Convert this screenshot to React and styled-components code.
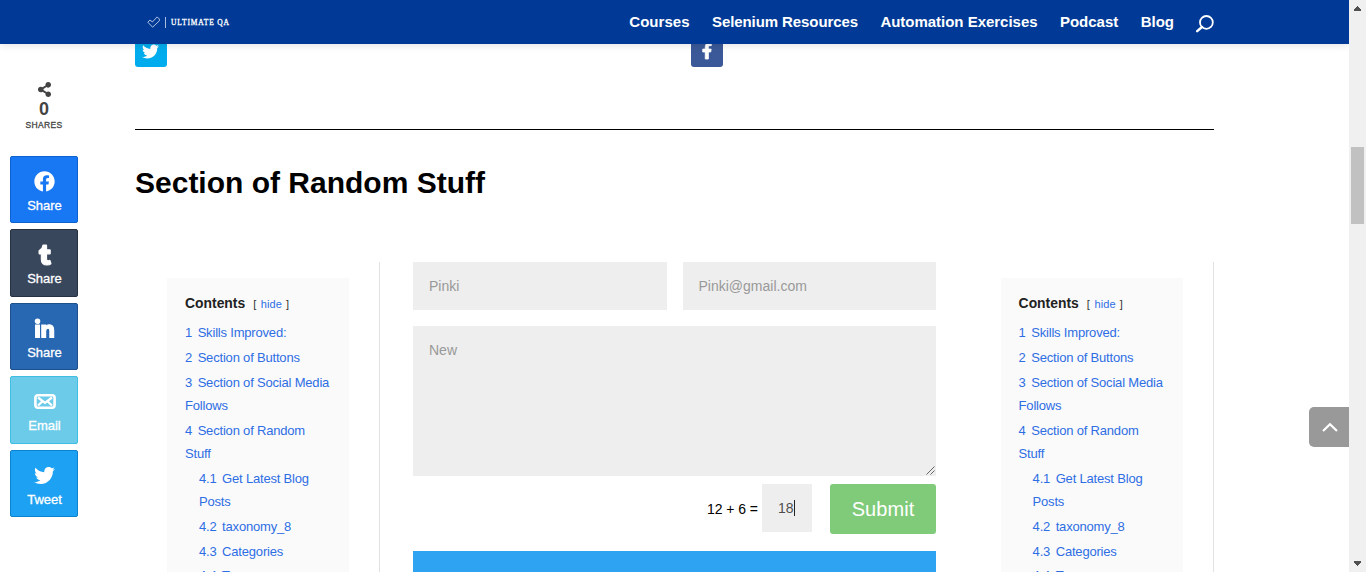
import React from 'react';
import styled, { createGlobalStyle } from 'styled-components';
import { FaTwitter, FaFacebookF, FaFacebook, FaTumblr, FaLinkedinIn, FaShareAlt } from 'react-icons/fa';

const GlobalStyle = createGlobalStyle`
  * { box-sizing: border-box; }
  body { margin: 0; background: #fff; overflow: hidden; font-family: "Liberation Sans", Arial, sans-serif; color: #000; }
  a { color: inherit; text-decoration: none; }
`;

const Window = styled.div`
  display: flex;
  width: 1366px;
  height: 572px;
  overflow: hidden;
  position: relative;
`;

const Page = styled.div`
  width: 1349px;
  height: 572px;
  overflow: hidden;
`;

const Header = styled.header`
  position: relative;
  z-index: 5;
  height: 44px;
  padding: 0 135px 0 147px;
  background: #003a96;
  box-shadow: 0 1px 8px rgba(0, 0, 0, 0.12);
  display: flex;
  align-items: center;
  justify-content: space-between;
`;

const Logo = styled.a`
  display: flex;
  align-items: center;
  color: #fff;
`;

const LogoText = styled.span`
  margin-left: 5px;
  padding-left: 5px;
  border-left: 1px solid #a9bcdd;
  font: 7.5px/11px "Liberation Serif", serif;
  -webkit-text-stroke: 0.3px #fff;
  letter-spacing: 0.85px;
  white-space: nowrap;
`;

const Nav = styled.nav`
  display: flex;
  align-items: center;
  height: 44px;
  gap: 22.4px;
`;

const NavLink = styled.a`
  color: #fff;
  font-size: 15px;
  font-weight: bold;
  line-height: 18px;
  letter-spacing: ${(p) => p.$track || 0}px;
  white-space: nowrap;
`;

const SearchButton = styled.a`
  display: flex;
  margin: 3px 0 0 -0.4px;
`;

const Body = styled.main`
  display: flex;
  align-items: flex-start;
`;

const ShareRail = styled.aside`
  width: 135px;
  flex: none;
  padding: 38px 0 0 10px;
`;

const ShareTotal = styled.div`
  width: 68px;
  height: 73.75px;
  display: flex;
  flex-direction: column;
  align-items: center;
  color: #444;
`;

const ShareCount = styled.strong`
  font-size: 18px;
  line-height: 18px;
  margin-top: 3px;
`;

const ShareLabel = styled.span`
  font-size: 8.5px;
  line-height: 12px;
  letter-spacing: 0.3px;
  margin-top: 1px;
  -webkit-text-stroke: 0.3px #444;
`;

const ShareList = styled.div`
  display: flex;
  flex-direction: column;
  gap: 6px;
`;

const ShareButton = styled.a`
  width: 68px;
  height: 67.5px;
  padding: 14px 0 0 1px;
  border: 1px solid ${(p) => p.$edge};
  border-radius: 2px;
  background: ${(p) => p.$fill};
  color: #fff;
  display: flex;
  flex-direction: column;
  align-items: center;
  font-size: 13px;
  line-height: 16px;
  -webkit-text-stroke: 0.3px #fff;
`;

const ShareIcon = styled.span`
  height: 21px;
  margin-bottom: 6px;
  padding-top: ${(p) => p.$drop || 0}px;
  display: flex;
  align-items: center;
  svg.heavy { stroke: #fff; stroke-width: 28px; overflow: visible; }
`;

const Content = styled.div`
  width: 1079px;
  flex: none;
  margin-top: -9px;
`;

const FollowRow = styled.div`
  display: grid;
  grid-template-columns: 556px 1fr;
`;

const FollowIcon = styled.a`
  width: 32px;
  height: 32px;
  padding-right: 1px;
  border-radius: 3px;
  background: ${(p) => p.$fill};
  color: #fff;
  display: flex;
  align-items: center;
  justify-content: center;
  svg.heavy { stroke: #fff; stroke-width: 26px; overflow: visible; }
`;

const Divider = styled.hr`
  margin: 62px 0 0;
  border: 0;
  height: 1px;
  background: #000;
`;

const Title = styled.h1`
  margin: 35px 0 0;
  font-size: 30px;
  line-height: 36px;
`;

const Columns = styled.div`
  display: flex;
  margin-top: 61px;
`;

const SideColumn = styled.section`
  width: 245px;
  flex: none;
  height: 310px;
  padding: 16px 30px 0 32px;
  border-right: 1px solid #e2e2e2;
`;

const TocBox = styled.div`
  height: 340px;
  padding: 14px 17px 0 ${(p) => p.$pad}px;
  background: #fafafa;
  color: #2e6ee4;
  font-size: 13px;
  line-height: 23px;
  letter-spacing: -0.19px;
`;

const TocHead = styled.div`
  display: flex;
  align-items: baseline;
  height: 23px;
  margin-bottom: 6px;
  color: #333;
  letter-spacing: 0;
`;

const TocTitle = styled.b`
  font-size: 13.9px;
  color: #222;
`;

const TocToggle = styled.span`
  margin-left: 8px;
  font-size: 11px;
  white-space: pre;
  a { color: #2e6ee4; margin: 0 1px 0 1.5px; letter-spacing: 0.1px; }
`;

const TocItem = styled.div`
  margin: 0 0 2px ${(p) => (p.$sub ? 14 : 0)}px;
  &:last-child { margin-top: -3px; padding-top: 2px; }
`;

const TocNumber = styled.span`
  margin-right: 5.6px;
`;

const FormColumn = styled.section`
  width: 523px;
  margin: 0 33px;
  flex: none;
`;

const FieldRow = styled.div`
  display: flex;
  gap: 16px;
  margin-bottom: 16px;
`;

const Field = styled.div`
  flex: 1;
  height: 48px;
  padding: 0 16px;
  background: #eee;
  color: #999;
  font-size: 14px;
  line-height: 48px;
`;

const MessageField = styled.div`
  height: 150px;
  padding: 16px;
  background: #eee;
  color: #999;
  font-size: 14px;
  line-height: 17px;
  display: flex;
  justify-content: space-between;
`;

const ResizeGrip = styled.svg`
  align-self: flex-end;
  margin: 0 -15px -15px 0;
`;

const SubmitRow = styled.div`
  display: flex;
  justify-content: flex-end;
  align-items: flex-start;
  margin-top: 8px;
  height: 67px;
`;

const Question = styled.span`
  margin-right: 4px;
  font-size: 14px;
  line-height: 50px;
  letter-spacing: -0.05px;
`;

const Answer = styled.div`
  width: 50px;
  height: 48px;
  margin-right: 18px;
  padding-left: 16px;
  background: #eee;
  color: #4e4e4e;
  font-size: 14px;
  display: flex;
  align-items: center;
`;

const Caret = styled.i`
  width: 1px;
  height: 16px;
  background: #222;
`;

const Submit = styled.button`
  width: 106px;
  height: 50px;
  border: 0;
  border-radius: 3px;
  padding: 0;
  background: #7fcb7a;
  color: #fff;
  font: 20px/50px "Liberation Sans", Arial, sans-serif;
  letter-spacing: 0.05px;
`;

const BlueBanner = styled.div`
  height: 60px;
  background: #2ea3f2;
`;

const BackToTop = styled.a`
  position: absolute;
  left: 1309px;
  top: 407px;
  width: 40px;
  height: 40px;
  padding-left: 2px;
  border-radius: 5px 0 0 5px;
  background: #999;
  display: flex;
  align-items: center;
  justify-content: center;
`;

const Scrollbar = styled.div`
  width: 17px;
  height: 572px;
  padding: 6px 2px 6px;
  background: #f0f0f0;
  display: flex;
  flex-direction: column;
  align-items: center;
`;

const Thumb = styled.div`
  width: 13px;
  height: 77px;
  margin: 136px 0 auto;
  background: #c1c1c1;
`;

const Arrow = ({ down }) => (
  <svg width="7" height="5" viewBox="0 0 7 5" shapeRendering="crispEdges">
    <path d={down ? 'M0 0.4H7V1.4L3.5 4.9L0 1.4Z' : 'M0 4.6H7V3.6L3.5 0.1L0 3.6Z'} fill="#505050" />
  </svg>
);

const EmailIcon = () => (
  <svg width="22" height="15" viewBox="0 0 22 15" fill="none" stroke="#fff">
    <rect x="1.4" y="1.3" width="19.2" height="12.4" rx="2.4" strokeWidth="2.6" />
    <path d="M4 3.5L11 8.8L18 3.5M4 11.5L8.3 7.5M18 11.5L13.7 7.5" strokeWidth="2.3" />
  </svg>
);

const shares = [
  { label: 'Share', icon: <FaFacebook size={21} />, fill: '#1877f2', edge: '#0d62d0' },
  { label: 'Share', icon: <FaTumblr size={20} className="heavy" />, fill: '#39475d', edge: '#263142' },
  { label: 'Share', icon: <FaLinkedinIn size={21} className="heavy" />, fill: '#2867b2', edge: '#1d508d', drop: 3 },
  { label: 'Email', icon: <EmailIcon />, fill: '#6bcbe9', edge: '#3fbde3' },
  { label: 'Tweet', icon: <FaTwitter size={21} />, fill: '#1da1f2', edge: '#0c83cd' },
];

const toc = [
  ['1', 'Skills Improved:'],
  ['2', 'Section of Buttons'],
  ['3', 'Section of Social Media Follows'],
  ['4', 'Section of Random Stuff'],
  ['4.1', 'Get Latest Blog Posts'],
  ['4.2', 'taxonomy_8'],
  ['4.3', 'Categories'],
  ['4.4', 'Tags'],
];

const Contents = ({ pad }) => (
  <TocBox $pad={pad}>
    <TocHead>
      <TocTitle>Contents</TocTitle>
      <TocToggle>[ <a>hide</a> ]</TocToggle>
    </TocHead>
    {toc.map(([number, text]) => (
      <TocItem key={number} $sub={number.includes('.')}>
        <TocNumber>{number}</TocNumber>
        {text}
      </TocItem>
    ))}
  </TocBox>
);

export default function App() {
  return (
    <>
      <GlobalStyle />
      <Window>
        <Page>
          <Header>
            <Logo>
              <svg width="13" height="12" viewBox="0 0 13 12" fill="none" stroke="#c6d3ea" strokeWidth="0.9">
                <path d="M0.8 6.2L3 4L5.4 6L10.2 0.9L12.4 3.1V4.8L5.6 11.2L0.8 6.2Z" />
              </svg>
              <LogoText>ULTIMATE QA</LogoText>
            </Logo>
            <Nav>
              <NavLink $track={0.05}>Courses</NavLink>
              <NavLink $track={-0.09}>Selenium Resources</NavLink>
              <NavLink $track={-0.02}>Automation Exercises</NavLink>
              <NavLink>Podcast</NavLink>
              <NavLink>Blog</NavLink>
              <SearchButton>
                <svg width="18" height="18" viewBox="0 0 18 18" fill="none" stroke="#fff">
                  <circle cx="10.4" cy="7.4" r="6.4" strokeWidth="1.8" />
                  <path d="M6 12L1.2 16.2" strokeWidth="2.4" strokeLinecap="round" />
                </svg>
              </SearchButton>
            </Nav>
          </Header>
          <Body>
            <ShareRail>
              <ShareTotal>
                <FaShareAlt size={15} />
                <ShareCount>0</ShareCount>
                <ShareLabel>SHARES</ShareLabel>
              </ShareTotal>
              <ShareList>
                {shares.map((s) => (
                  <ShareButton key={s.fill} $fill={s.fill} $edge={s.edge}>
                    <ShareIcon $drop={s.drop}>{s.icon}</ShareIcon>
                    {s.label}
                  </ShareButton>
                ))}
              </ShareList>
            </ShareRail>
            <Content>
              <FollowRow>
                <FollowIcon $fill="#00aced"><FaTwitter size={17} /></FollowIcon>
                <FollowIcon $fill="#3b5998"><FaFacebookF size={16} className="heavy" /></FollowIcon>
              </FollowRow>
              <Divider />
              <Title>Section of Random Stuff</Title>
              <Columns>
                <SideColumn>
                  <Contents pad={18} />
                </SideColumn>
                <FormColumn>
                  <FieldRow>
                    <Field>Pinki</Field>
                    <Field>Pinki@gmail.com</Field>
                  </FieldRow>
                  <MessageField>
                    New
                    <ResizeGrip width="9" height="9" viewBox="0 0 9 9" stroke="#555" strokeWidth="0.9">
                      <path d="M0.5 8.5L8.5 0.5M4.5 8.5L8.5 4.5" />
                    </ResizeGrip>
                  </MessageField>
                  <SubmitRow>
                    <Question>12 + 6 =</Question>
                    <Answer>18<Caret /></Answer>
                    <Submit>Submit</Submit>
                  </SubmitRow>
                  <BlueBanner />
                </FormColumn>
                <SideColumn>
                  <Contents pad={17.6} />
                </SideColumn>
              </Columns>
            </Content>
          </Body>
        </Page>
        <Scrollbar>
          <Arrow />
          <Thumb />
          <Arrow down />
        </Scrollbar>
        <BackToTop>
          <svg width="16" height="9" viewBox="0 0 16 9" fill="none" stroke="#fff" strokeWidth="2.2">
            <path d="M1 8L8 1.2L15 8" />
          </svg>
        </BackToTop>
      </Window>
    </>
  );
}
